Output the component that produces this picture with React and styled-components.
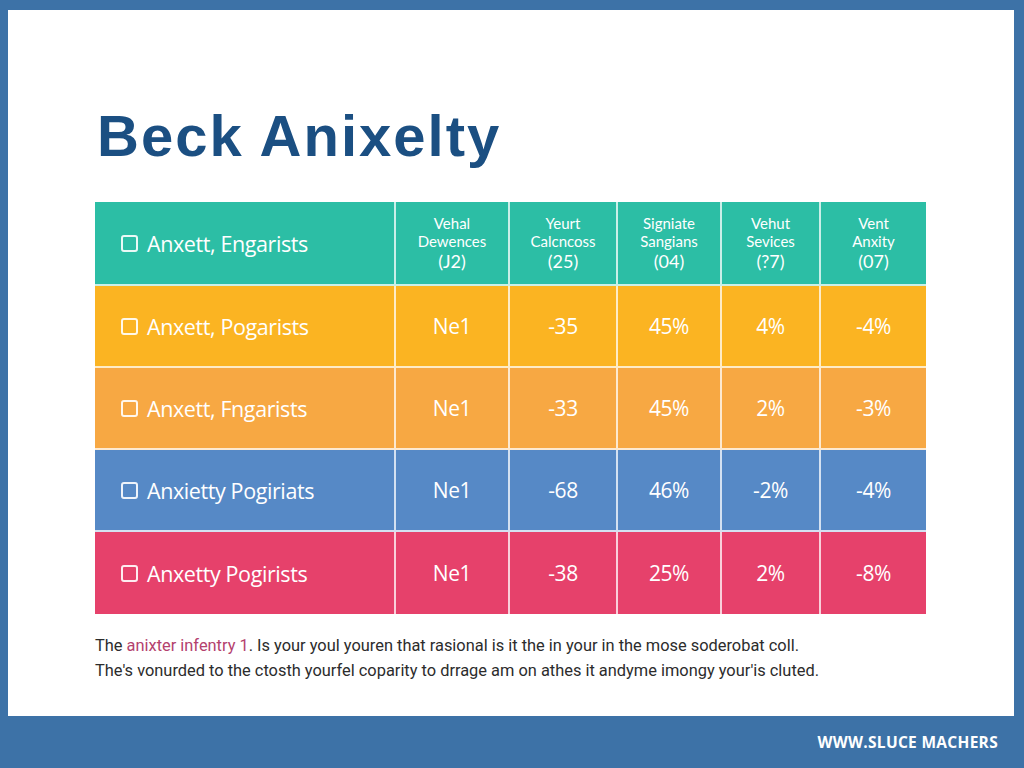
import React from "react";
import styled, { createGlobalStyle } from "styled-components";

const GlobalStyle = createGlobalStyle`
  html, body {
    margin: 0;
    padding: 0;
    background: #ffffff;
  }
  * {
    box-sizing: border-box;
  }
`;

const headers = [
  ["Vehal", "Dewences", "(J2)"],
  ["Yeurt", "Calcncoss", "(25)"],
  ["Signiate", "Sangians", "(04)"],
  ["Vehut", "Sevices", "(?7)"],
  ["Vent", "Anxity", "(07)"],
];

const rows = [
  { label: "Anxett, Pogarists", color: "#fbb422", values: ["Ne1", "-35", "45%", "4%", "-4%"] },
  { label: "Anxett, Fngarists", color: "#f7a843", values: ["Ne1", "-33", "45%", "2%", "-3%"] },
  { label: "Anxietty Pogiriats", color: "#5689c6", values: ["Ne1", "-68", "46%", "-2%", "-4%"] },
  { label: "Anxetty Pogirists", color: "#e6416b", values: ["Ne1", "-38", "25%", "2%", "-8%"] },
];

export default function App() {
  return (
    <>
      <GlobalStyle />
      <Frame>
        <Panel>
          <Title>Beck Anixelty</Title>
          <Table>
            <Row $bg="#2cbea5" $height={84}>
              <LabelCell>
                <Check />
                Anxett, Engarists
              </LabelCell>
              {headers.map((h, i) => (
                <HeadCell key={i}>
                  <span>{h[0]}</span>
                  <span>{h[1]}</span>
                  <HeadNum>{h[2]}</HeadNum>
                </HeadCell>
              ))}
            </Row>
            {rows.map((r, i) => (
              <Row key={i} $bg={r.color} $height={82} $last={i === rows.length - 1}>
                <LabelCell>
                  <Check />
                  {r.label}
                </LabelCell>
                {r.values.map((v, j) => (
                  <ValueCell key={j}>{v}</ValueCell>
                ))}
              </Row>
            ))}
          </Table>
          <Note>
            The <Accent>anixter infentry 1</Accent>. Is your youl youren that rasional is it the in your in the mose soderobat coll.
            <br />
            The's vonurded to the ctosth yourfel coparity to drrage am on athes it andyme imongy your'is cluted.
          </Note>
        </Panel>
        <Footer>WWW.SLUCE MACHERS</Footer>
      </Frame>
    </>
  );
}

const Frame = styled.div`
  width: 1024px;
  height: 768px;
  background: #3d72a7;
  display: flex;
  flex-direction: column;
  padding: 10px 10px 0 8px;
`;

const Panel = styled.div`
  flex: 1;
  background: #ffffff;
  padding: 94px 78px 0 87px;
  display: flex;
  flex-direction: column;
`;

const Title = styled.h1`
  margin: 0 0 34px 2px;
  font-family: "Liberation Sans", Arial, sans-serif;
  font-weight: 700;
  font-size: 58px;
  line-height: 64px;
  color: #1b4f82;
  letter-spacing: 2px;
`;

const Table = styled.div`
  display: flex;
  flex-direction: column;
  width: 831px;
`;

const Row = styled.div`
  display: grid;
  grid-template-columns: 301px 114px 108px 104px 99px 105px;
  height: ${(p) => p.$height}px;
  background: ${(p) => p.$bg};
  border-bottom: ${(p) => (p.$last ? "none" : "2px solid rgba(255, 255, 255, 0.75)")};
  font-family: "Open Sans", "Lato", sans-serif;
  color: #ffffff;
`;

const Cell = styled.div`
  display: flex;
  align-items: center;
  border-right: 2px solid rgba(255, 255, 255, 0.75);
  &:last-child {
    border-right: none;
  }
`;

const LabelCell = styled(Cell)`
  padding-left: 26px;
  gap: 9px;
  font-size: 21.5px;
  letter-spacing: -0.4px;
`;

const Check = styled.span`
  width: 17px;
  height: 17px;
  border: 2px solid rgba(255, 255, 255, 0.9);
  border-radius: 3px;
  flex-shrink: 0;
`;

const HeadCell = styled(Cell)`
  flex-direction: column;
  justify-content: center;
  font-family: "Lato", "Open Sans", sans-serif;
  font-size: 15px;
  line-height: 18px;
  text-align: center;
`;

const HeadNum = styled.span`
  font-size: 18px;
  line-height: 22px;
`;

const ValueCell = styled(Cell)`
  justify-content: center;
  font-size: 21px;
  letter-spacing: -0.4px;
`;

const Note = styled.p`
  margin: 19px 0 0 0;
  font-family: "Roboto", "Liberation Sans", sans-serif;
  font-size: 16.4px;
  line-height: 25px;
  color: #2c2c2c;
`;

const Accent = styled.span`
  color: #b4416e;
`;

const Footer = styled.div`
  height: 52px;
  display: flex;
  align-items: center;
  justify-content: flex-end;
  padding-right: 16px;
  font-family: "Open Sans", sans-serif;
  font-weight: 700;
  font-size: 15.5px;
  color: #ffffff;
  letter-spacing: 0.3px;
`;
